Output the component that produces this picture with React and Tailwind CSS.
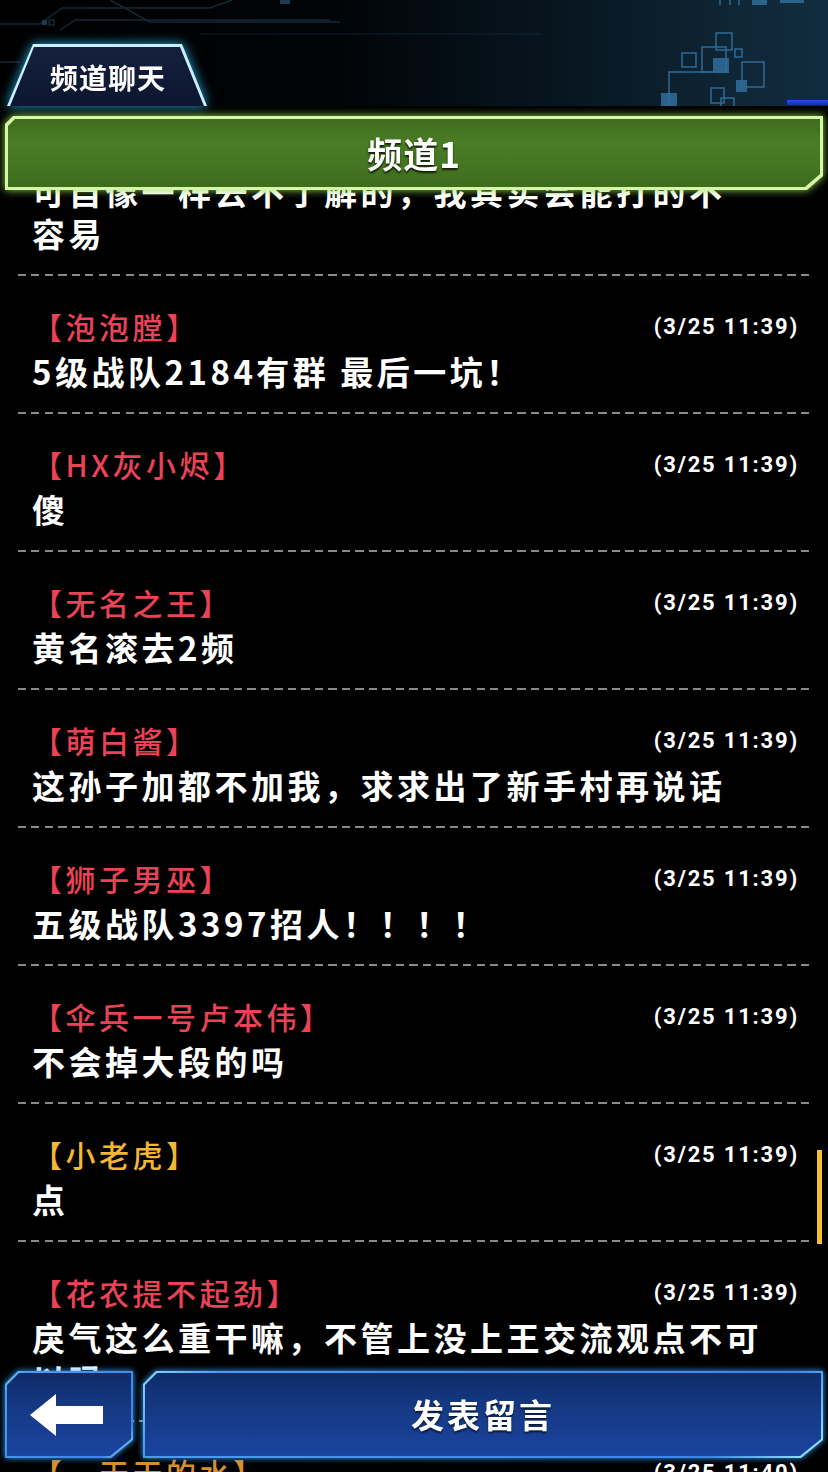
import React from 'react';

const CJK = "font-['Noto_Sans_CJK_SC','Noto_Sans',sans-serif]";

const messages = [
  { name: '路人甲', color: 'text-[#ea4256]', time: '3/25 11:38', lines: ['可自像一样去不了解的，我其实会能打的不', '容易'] },
  { name: '泡泡膛', color: 'text-[#ea4256]', time: '3/25 11:39', lines: ['5级战队2184有群 最后一坑！'] },
  { name: 'HX灰小烬', color: 'text-[#ea4256]', time: '3/25 11:39', lines: ['傻'] },
  { name: '无名之王', color: 'text-[#ea4256]', time: '3/25 11:39', lines: ['黄名滚去2频'] },
  { name: '萌白酱', color: 'text-[#ea4256]', time: '3/25 11:39', lines: ['这孙子加都不加我，求求出了新手村再说话'] },
  { name: '狮子男巫', color: 'text-[#ea4256]', time: '3/25 11:39', lines: ['五级战队3397招人！！！！'] },
  { name: '伞兵一号卢本伟', color: 'text-[#ea4256]', time: '3/25 11:39', lines: ['不会掉大段的吗'] },
  { name: '小老虎', color: 'text-[#f2b735]', time: '3/25 11:39', lines: ['点'] },
  { name: '花农提不起劲', color: 'text-[#ea4256]', time: '3/25 11:39', lines: ['戾气这么重干嘛，不管上没上王交流观点不可', '以吗'] },
  { name: '一天天的水', color: 'text-[#d9902a]', time: '3/25 11:40', lines: ['有人吗'] },
];

const ChatRow = ({ name, color, time, lines }) => (
  <div>
    <div className="pt-[34px] pb-[20px] pl-[32px] pr-[29px]">
      <div className="flex h-[32px] items-center justify-between">
        <span className={`${CJK} ${color} text-[30px] leading-[32px] font-medium tracking-[3.5px]`}>【{name}】</span>
        <span className="font-['Roboto',sans-serif] text-[22px] font-bold tracking-[1.8px] text-white">({time})</span>
      </div>
      <div className="mt-[8px]">
        {lines.map((line, i) => (
          <div key={i} className={`${CJK} whitespace-nowrap text-[33px] leading-[42px] font-bold tracking-[3.5px] text-white`}>
            {line}
          </div>
        ))}
      </div>
    </div>
    <div className="mx-[18px] h-[2px] bg-[repeating-linear-gradient(90deg,#8a8a8a_0_8px,transparent_8px_13.5px)]" />
  </div>
);

const HeaderDecor = () => (
  <svg className="absolute inset-0" width="828" height="106" viewBox="0 0 828 106" fill="none">
    <g stroke="#1b3a4e" strokeWidth="1.5" opacity="0.7">
      <path d="M0 24 H40 L62 8 H210 L232 0" />
      <path d="M60 30 L75 20 H330" />
      <path d="M110 0 L150 22 H340" />
      <path d="M0 62 H20" />
      <path d="M200 34 H540" opacity="0.5" />
    </g>
    <g fill="#1c3a50">
      <rect x="42" y="20" width="5" height="5" />
      <rect x="49" y="20" width="5" height="5" fill="none" stroke="#1c3a50" />
      <rect x="280" y="0" width="10" height="4" />
    </g>
    <g stroke="#2f6a96" strokeWidth="1.5" fill="none">
      <rect x="716" y="33" width="16" height="17" />
      <rect x="682" y="53" width="14" height="14" />
      <rect x="702" y="47" width="24" height="25" />
      <rect x="735" y="49" width="7" height="8" />
      <rect x="742" y="62" width="22" height="25" />
      <rect x="711" y="88" width="13" height="15" />
      <rect x="721" y="98" width="13" height="10" />
      <path d="M711 72 H669 V106" />
      <path d="M720 0 V5 M730 0 V5 M739 0 V5" />
    </g>
    <g fill="#2f6a96" opacity="0.9">
      <rect x="713" y="58" width="16" height="15" />
      <rect x="736" y="80" width="11" height="12" />
      <rect x="661" y="93" width="16" height="13" />
      <rect x="752" y="0" width="15" height="5" />
      <rect x="780" y="0" width="24" height="3" />
    </g>
  </svg>
);

const BlueButton = ({ className, children }) => (
  <div className={`${className} drop-shadow-[0_0_3px_#3a9cff]`}>
    <div className="h-full w-full bg-[linear-gradient(135deg,#8fd8ff_0%,#4a9cf0_10%,#3a86e6_85%,#9ff0ff_100%)] p-[2px] [clip-path:polygon(13px_0,100%_0,100%_calc(100%_-_18px),calc(100%_-_22px)_100%,0_100%,0_13px)]">
      <div className="flex h-full w-full items-center justify-center bg-[linear-gradient(180deg,#0f2c6a_0%,#163a86_45%,#1b43a0_100%)] [clip-path:polygon(12px_0,100%_0,100%_calc(100%_-_17px),calc(100%_-_21px)_100%,0_100%,0_12px)]">
        {children}
      </div>
    </div>
  </div>
);

export default function App() {
  return (
    <div className="relative h-[1472px] w-[828px] overflow-hidden bg-black">
      {/* header */}
      <div className="relative flex h-[106px] items-end bg-[linear-gradient(90deg,#000_0%,#010407_40%,#081722_70%,#0f2737_90%,#122c3f_100%)] pl-[7px]">
        <HeaderDecor />
        <div className="absolute bottom-[1px] right-0 h-[5px] w-[41px] bg-[linear-gradient(180deg,#2a4cf0,#1530a8)]" />
        <div className="relative drop-shadow-[0_0_6px_#2aa6d8]">
          <div className="h-[62px] w-[200px] bg-[#c9f0ff] px-[3px] pt-[3px] [clip-path:polygon(26px_0,175px_0,200px_100%,0_100%)]">
            <div className="flex h-full w-full items-center bg-[linear-gradient(180deg,#15203e_0%,#0c1630_100%)] pl-[40px] [clip-path:polygon(24px_0,170px_0,194px_100%,0_100%)]">
              <span className={`${CJK} text-[28px] font-bold tracking-[1px] text-white`}>频道聊天</span>
            </div>
          </div>
        </div>
      </div>

      {/* channel bar */}
      <div className="relative z-10 mx-[5px] mt-[10px] h-[74px] drop-shadow-[0_0_4px_#8fd850]">
        <div className="h-full w-full bg-[#d6f7a6] p-[3px] [clip-path:polygon(8px_0,100%_0,100%_calc(100%_-_14px),calc(100%_-_16px)_100%,0_100%,0_8px)]">
          <div className="flex h-full w-full items-center justify-center bg-[linear-gradient(180deg,#3f6d1c_0%,#4a7c25_35%,#447522_70%,#3e6c1d_100%)] [clip-path:polygon(7px_0,100%_0,100%_calc(100%_-_13px),calc(100%_-_15px)_100%,0_100%,0_7px)]">
            <span className={`${CJK} text-[35px] font-bold tracking-[1px] text-white [text-shadow:0_2px_2px_rgba(0,0,0,0.75)]`}>频道1</span>
          </div>
        </div>
      </div>

      {/* chat list */}
      <div className="relative h-[1282px] overflow-hidden">
        <div className="mt-[-94px]">
          {messages.map((m, i) => (
            <ChatRow key={i} {...m} />
          ))}
        </div>
        <div className="absolute left-[817px] top-[960px] h-[94px] w-[5px] bg-[#f5c030]" />
      </div>

      {/* bottom buttons */}
      <div className="absolute bottom-[14px] left-[5px] right-[5px] flex h-[87px] gap-[10px]">
        <BlueButton className="h-full w-[128px]">
          <svg width="128" height="87" viewBox="0 0 128 87" className="absolute inset-0">
            <path d="M25 44 L51 23 L51 35 L98 35 L98 53 L51 53 L51 65 Z" fill="#fff" />
          </svg>
        </BlueButton>
        <BlueButton className="h-full flex-1">
          <span className={`${CJK} text-[33px] font-bold tracking-[3px] text-white [text-shadow:0_2px_2px_rgba(0,0,0,0.6)]`}>发表留言</span>
        </BlueButton>
      </div>
    </div>
  );
}
